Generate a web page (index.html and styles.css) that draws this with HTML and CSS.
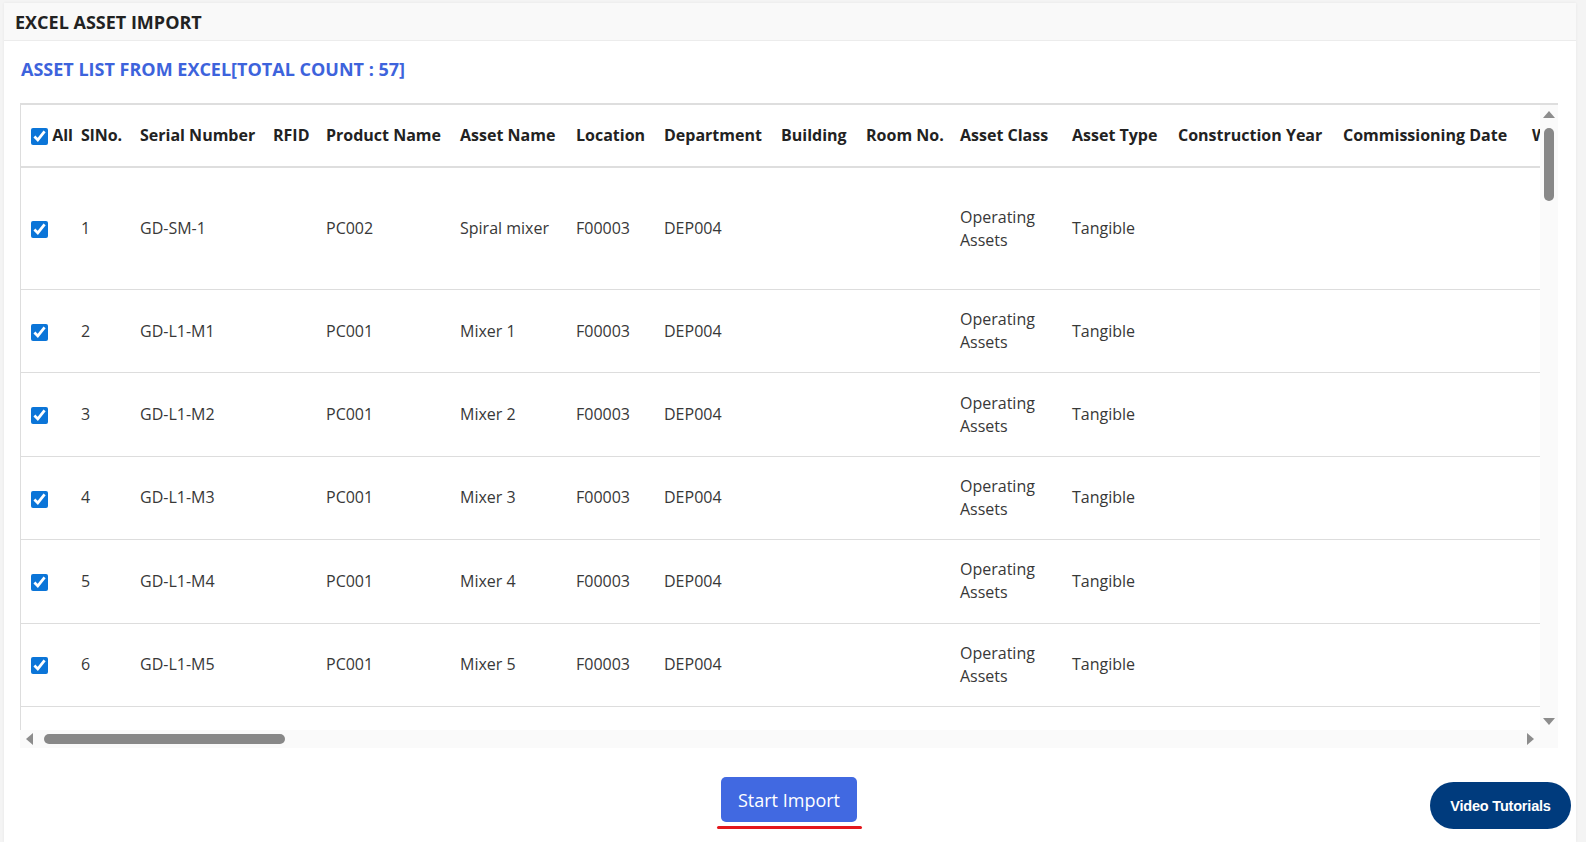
FILE: index.html
```
<!DOCTYPE html>
<html lang="en">
<head>
  <meta charset="UTF-8">
  <title>Excel Asset Import</title>
  <link rel="stylesheet" href="styles.css">
</head>
<body>

  <div class="page">
    <div class="card">
      <div class="card-head">EXCEL ASSET IMPORT</div>

      <div class="card-body">
        <h2 class="list-title">ASSET LIST FROM EXCEL[TOTAL COUNT : 57]</h2>

        <div class="table-frame">
          <div class="table-view">
            <table class="asset-table">
              <colgroup>
                <col class="c-check">
                <col class="c-slno">
                <col class="c-serial">
                <col class="c-rfid">
                <col class="c-product">
                <col class="c-asset">
                <col class="c-location">
                <col class="c-dept">
                <col class="c-building">
                <col class="c-room">
                <col class="c-class">
                <col class="c-type">
                <col class="c-year">
                <col class="c-date">
                <col class="c-warranty">
              </colgroup>
              <thead>
                <tr>
                  <th><input type="checkbox" class="chk chk-all" checked> All</th>
                  <th>SlNo.</th>
                  <th>Serial Number</th>
                  <th>RFID</th>
                  <th>Product Name</th>
                  <th>Asset Name</th>
                  <th>Location</th>
                  <th>Department</th>
                  <th>Building</th>
                  <th>Room No.</th>
                  <th>Asset Class</th>
                  <th>Asset Type</th>
                  <th>Construction Year</th>
                  <th>Commissioning Date</th>
                  <th>W</th>
                </tr>
              </thead>
              <tbody>
                <tr class="row-tall">
                  <td><input type="checkbox" class="chk" checked></td>
                  <td>1</td><td>GD-SM-1</td><td></td><td>PC002</td><td>Spiral mixer</td>
                  <td>F00003</td><td>DEP004</td><td></td><td></td>
                  <td>Operating Assets</td><td>Tangible</td><td></td><td></td><td></td>
                </tr>
                <tr>
                  <td><input type="checkbox" class="chk" checked></td>
                  <td>2</td><td>GD-L1-M1</td><td></td><td>PC001</td><td>Mixer 1</td>
                  <td>F00003</td><td>DEP004</td><td></td><td></td>
                  <td>Operating Assets</td><td>Tangible</td><td></td><td></td><td></td>
                </tr>
                <tr>
                  <td><input type="checkbox" class="chk" checked></td>
                  <td>3</td><td>GD-L1-M2</td><td></td><td>PC001</td><td>Mixer 2</td>
                  <td>F00003</td><td>DEP004</td><td></td><td></td>
                  <td>Operating Assets</td><td>Tangible</td><td></td><td></td><td></td>
                </tr>
                <tr>
                  <td><input type="checkbox" class="chk" checked></td>
                  <td>4</td><td>GD-L1-M3</td><td></td><td>PC001</td><td>Mixer 3</td>
                  <td>F00003</td><td>DEP004</td><td></td><td></td>
                  <td>Operating Assets</td><td>Tangible</td><td></td><td></td><td></td>
                </tr>
                <tr>
                  <td><input type="checkbox" class="chk" checked></td>
                  <td>5</td><td>GD-L1-M4</td><td></td><td>PC001</td><td>Mixer 4</td>
                  <td>F00003</td><td>DEP004</td><td></td><td></td>
                  <td>Operating Assets</td><td>Tangible</td><td></td><td></td><td></td>
                </tr>
                <tr>
                  <td><input type="checkbox" class="chk" checked></td>
                  <td>6</td><td>GD-L1-M5</td><td></td><td>PC001</td><td>Mixer 5</td>
                  <td>F00003</td><td>DEP004</td><td></td><td></td>
                  <td>Operating Assets</td><td>Tangible</td><td></td><td></td><td></td>
                </tr>
                <tr class="row-cut">
                  <td></td>
                  <td></td><td></td><td></td><td></td><td></td>
                  <td></td><td></td><td></td><td></td>
                  <td></td><td></td><td></td><td></td><td></td>
                </tr>
              </tbody>
            </table>
          </div>

          <!-- scrollbars drawn by hand, the browser hides its own -->
          <div class="vbar">
            <svg class="arrow" width="12" height="7" viewBox="0 0 12 7"><polygon points="6,0 12,7 0,7" fill="#8c8c8c"/></svg>
            <div class="vtrack"><div class="vthumb"></div></div>
            <svg class="arrow" width="12" height="7" viewBox="0 0 12 7"><polygon points="0,0 12,0 6,7" fill="#8c8c8c"/></svg>
          </div>
          <div class="hbar">
            <svg class="arrow" width="7" height="12" viewBox="0 0 7 12"><polygon points="7,0 7,12 0,6" fill="#8c8c8c"/></svg>
            <div class="htrack"><div class="hthumb"></div></div>
            <svg class="arrow" width="7" height="12" viewBox="0 0 7 12"><polygon points="0,0 7,6 0,12" fill="#8c8c8c"/></svg>
          </div>
          <div class="corner"></div>
        </div>

        <div class="actions">
          <div class="import-wrap">
            <button class="btn-import">Start Import</button>
            <div class="import-mark"></div>
          </div>
        </div>
      </div>
    </div>
  </div>

  <a class="video-btn" href="#">Video Tutorials</a>

</body>
</html>
```

FILE: styles.css
```
html, body {
  margin: 0;
  height: 842px;
  overflow: hidden;
}
body {
  background: #f4f4f4;
  font-family: "Open Sans", Arial, sans-serif;
  color: #333;
}
.page {
  padding: 3px 10px 0 4px;
  height: 842px;
  box-sizing: border-box;
}
.card {
  background: #fff;
  height: 100%;
  box-shadow: 0 0 3px rgba(0, 0, 0, 0.06);
}
.card-head {
  height: 37px;
  padding: 0 11px;
  display: flex;
  align-items: center;
  background: #f9f9f9;
  border-bottom: 1px solid #ececec;
  font-size: 18px;
  font-weight: 700;
  color: #222;
}
.card-body {
  padding: 0 18px 0 16px;
}
.list-title {
  margin: 16px 0 22px 1px;
  font-size: 18px;
  line-height: 24px;
  font-weight: 700;
  color: #3d63dc;
}

/* table box with its scrollbars */
.table-frame {
  height: 645px;
  box-sizing: border-box;
  border-top: 2px solid #dedede;
  display: grid;
  grid-template-columns: 1fr 18px;
  grid-template-rows: 1fr 18px;
}
.table-view {
  overflow: hidden;
}
.vbar, .hbar, .corner {
  background: #fafafa;
}
.vbar {
  display: flex;
  flex-direction: column;
  align-items: center;
}
.vbar .arrow {
  margin: 6px 0 5px;
  flex: none;
}
.vtrack {
  flex: 1;
  padding-top: 5px;
}
.vthumb {
  width: 10px;
  height: 73px;
  border-radius: 5px;
  background: #888;
}
.hbar {
  display: flex;
  align-items: center;
}
.hbar .arrow {
  margin: 0 6px;
  flex: none;
}
.htrack {
  flex: 1;
  padding-left: 5px;
}
.hthumb {
  width: 241px;
  height: 10px;
  border-radius: 5px;
  background: #888;
}

.asset-table {
  table-layout: fixed;
  width: 1682px;
  border-collapse: separate;
  border-spacing: 0;
  border-left: 1px solid #dddddd;
}
.c-check { width: 51px; }
.c-slno { width: 59px; }
.c-serial { width: 133px; }
.c-rfid { width: 53px; }
.c-product { width: 134px; }
.c-asset { width: 116px; }
.c-location { width: 88px; }
.c-dept { width: 117px; }
.c-building { width: 85px; }
.c-room { width: 94px; }
.c-class { width: 112px; }
.c-type { width: 106px; }
.c-year { width: 165px; }
.c-date { width: 189px; }
.c-warranty { width: 180px; }

.asset-table th {
  padding: 19px 9px;
  line-height: 23px;
  text-align: left;
  font-size: 16px;
  font-weight: 700;
  color: #222;
  white-space: nowrap;
  border-bottom: 2px solid #dedede;
}
.asset-table td {
  padding: 18.2px 9px;
  line-height: 23px;
  font-size: 16px;
  color: #383838;
  vertical-align: middle;
  border-bottom: 1px solid #dddddd;
}
.asset-table th:first-child,
.asset-table td:first-child {
  padding-left: 10px;
  padding-right: 0;
}
.asset-table .row-tall td {
  padding-top: 37.5px;
  padding-bottom: 37.5px;
}
.asset-table .row-cut td {
  height: 40px;
  border-bottom: none;
}
.chk {
  width: 17px;
  height: 17px;
  margin: 0;
  vertical-align: middle;
  accent-color: #0b75d8;
}
.chk-all {
  vertical-align: -4px;
}

/* bottom buttons */
.actions {
  display: flex;
  justify-content: center;
  padding-top: 29px;
}
.import-wrap {
  display: flex;
  flex-direction: column;
  align-items: center;
}
.btn-import {
  width: 136px;
  height: 45px;
  border: none;
  border-radius: 5px;
  background: #4169e1;
  color: #fff;
  font-family: "Open Sans", Arial, sans-serif;
  font-size: 18px;
}
.import-mark {
  width: 145px;
  height: 3px;
  margin-top: 4px;
  border-radius: 2px;
  background: #e3171d;
}
.video-btn {
  position: fixed;
  right: 15px;
  bottom: 13px;
  width: 141px;
  height: 47px;
  border-radius: 24px;
  background: #003b7d;
  color: #fff;
  display: flex;
  align-items: center;
  justify-content: center;
  text-decoration: none;
  font-family: "Liberation Sans", Arial, sans-serif;
  font-weight: 700;
  font-size: 14.5px;
  letter-spacing: -0.2px;
}
```
